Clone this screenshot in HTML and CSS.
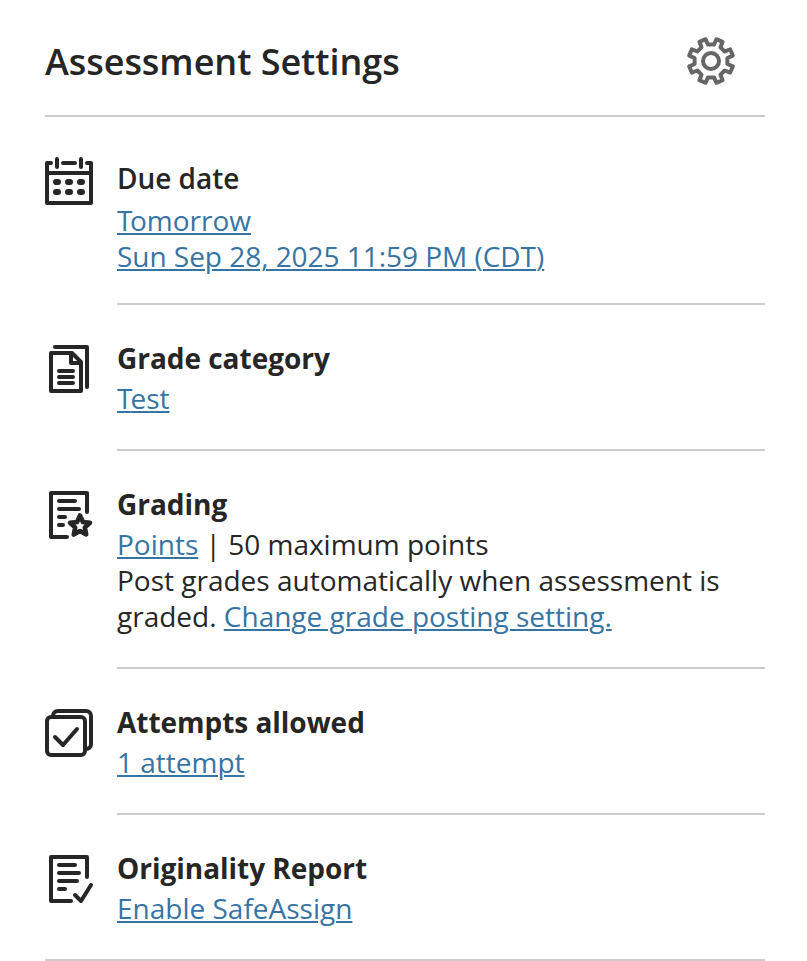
FILE: index.html
```html
<!DOCTYPE html>
<html lang="en">
<head>
<meta charset="utf-8">
<title>Assessment Settings</title>
<link rel="stylesheet" href="styles.css">
</head>
<body>
<main class="panel">
  <header class="panel-header">
    <h1>Assessment Settings</h1>
    <svg class="icon gear" viewBox="0 0 48 48"><g transform="translate(24 24)"><circle r="8"/><path d="M-3-16.4L3-16.4L5.4-21.8L11.6-19.2L9.5-13.7L13.7-9.5L19.2-11.6L21.8-5.4L16.4-3L16.4 3L21.8 5.4L19.2 11.6L13.7 9.5L9.5 13.7L11.6 19.2L5.4 21.8L3 16.4L-3 16.4L-5.4 21.8L-11.6 19.2L-9.5 13.7L-13.7 9.5L-19.2 11.6L-21.8 5.4L-16.4 3L-16.4-3L-21.8-5.4L-19.2-11.6L-13.7-9.5L-9.5-13.7L-11.6-19.2L-5.4-21.8Z"/></g></svg>
  </header>

  <section class="setting due">
    <svg class="icon" viewBox="0 0 48 48"><path d="M6 6H2V46H46V6H42M2 16H46M12 2V10M36 2V10M18 6H30"/><path class="dots" d="M11 25H13M23 25H25M35 25H37M11 35H13M23 35H25M35 35H37"/></svg>
    <div class="content">
      <h2>Due date</h2>
      <p><a><span class="kern-wide">T</span>omorrow</a><br><a class="date">Sun Sep 28, 2025 11:59 PM (CDT)</a></p>
    </div>
  </section>

  <section class="setting">
    <svg class="icon" viewBox="0 0 48 48"><path d="M10 2H42V42M27 8H6V46H36V17ZM26 8V18H36M14 26H28M14 32H28M14 38H28"/></svg>
    <div class="content">
      <h2>Grade category</h2>
      <p><a><span class="kern">T</span>est</a></p>
    </div>
  </section>

  <section class="setting">
    <svg class="icon" viewBox="0 0 48 48"><path d="M22 46H6V2H42V21M14 10H30M14 18H34M14 26H20M14 34H18"/><path class="star" d="M35 24.5L37.9 31L45 31.8L39.8 36.5L41.2 43.5L35 40L28.8 43.5L30.2 36.5L25 31.8L32.1 31Z"/></svg>
    <div class="content">
      <h2>Grading</h2>
      <p><a>Points</a> | 50 maximum points<br>Post grades automatically when assessment is<br>graded. <a>Change grade posting setting.</a></p>
    </div>
  </section>

  <section class="setting">
    <svg class="icon" viewBox="0 0 48 48"><rect x="2" y="8" width="38" height="38" rx="4"/><path d="M8 7C8 4 10 2 13 2H41C44 2 46 4 46 7V35C46 38 44 40 41 40M10 28L18 36L32 20"/></svg>
    <div class="content">
      <h2>Attempts allowed</h2>
      <p><a>1 attempt</a></p>
    </div>
  </section>

  <section class="setting">
    <svg class="icon" viewBox="0 0 48 48"><path d="M26 46H6V2H42V22M14 10H30M14 18H34M14 26H32M14 34H20M30 40L36 46L46 30"/></svg>
    <div class="content">
      <h2>Originality Report</h2>
      <p><a>Enable SafeAssign</a></p>
    </div>
  </section>
</main>
</body>
</html>
```
FILE: styles.css
```css
* { box-sizing: border-box; }
body {
  margin: 0;
  background: #fff;
  color: #262626;
  font: 400 28px/36px "Open Sans", sans-serif;
  overflow: hidden;
}
.panel { width: 720px; margin-left: 45px; border-bottom: 2px solid #ccc; }
.panel-header {
  display: flex;
  justify-content: space-between;
  align-items: flex-start;
  height: 117px;
  padding: 37px 30px 0 0;
  border-bottom: 2px solid #ccc;
}
h1 {
  margin: 0;
  font-size: 36px;
  line-height: 50px;
  font-weight: 600;
  letter-spacing: -0.05px;
}
h2 {
  margin: 0 0 4px;
  font-size: 28px;
  line-height: 36px;
  font-weight: 700;
  letter-spacing: -0.03px;
}
p { margin: 0; white-space: nowrap; }
.setting { display: flex; gap: 24px; }
.content { flex: 1; padding: 35px 0 33px; border-bottom: 2px solid #ccc; }
.setting:last-child .content { border-bottom: 0; }
.due .content { padding: 43px 0 29px; }
.due h2 { margin-bottom: 6px; font-weight: 600; }
a {
  color: #3874a3;
  text-decoration: underline;
  text-decoration-thickness: 2px;
  text-underline-offset: 2px;
}
.date { letter-spacing: -0.03px; }
.kern { letter-spacing: -2px; }
.kern-wide { letter-spacing: -2.5px; }
.icon {
  flex: none;
  width: 48px;
  height: 48px;
  margin-top: 40px;
  overflow: visible;
  fill: none;
  stroke: #262626;
  stroke-width: 4;
  stroke-linecap: round;
  stroke-linejoin: round;
}
.icon .dots { stroke-width: 6; }
.icon .star { stroke-width: 4.6; }
.gear { margin-top: 0; stroke: #666; }
```
